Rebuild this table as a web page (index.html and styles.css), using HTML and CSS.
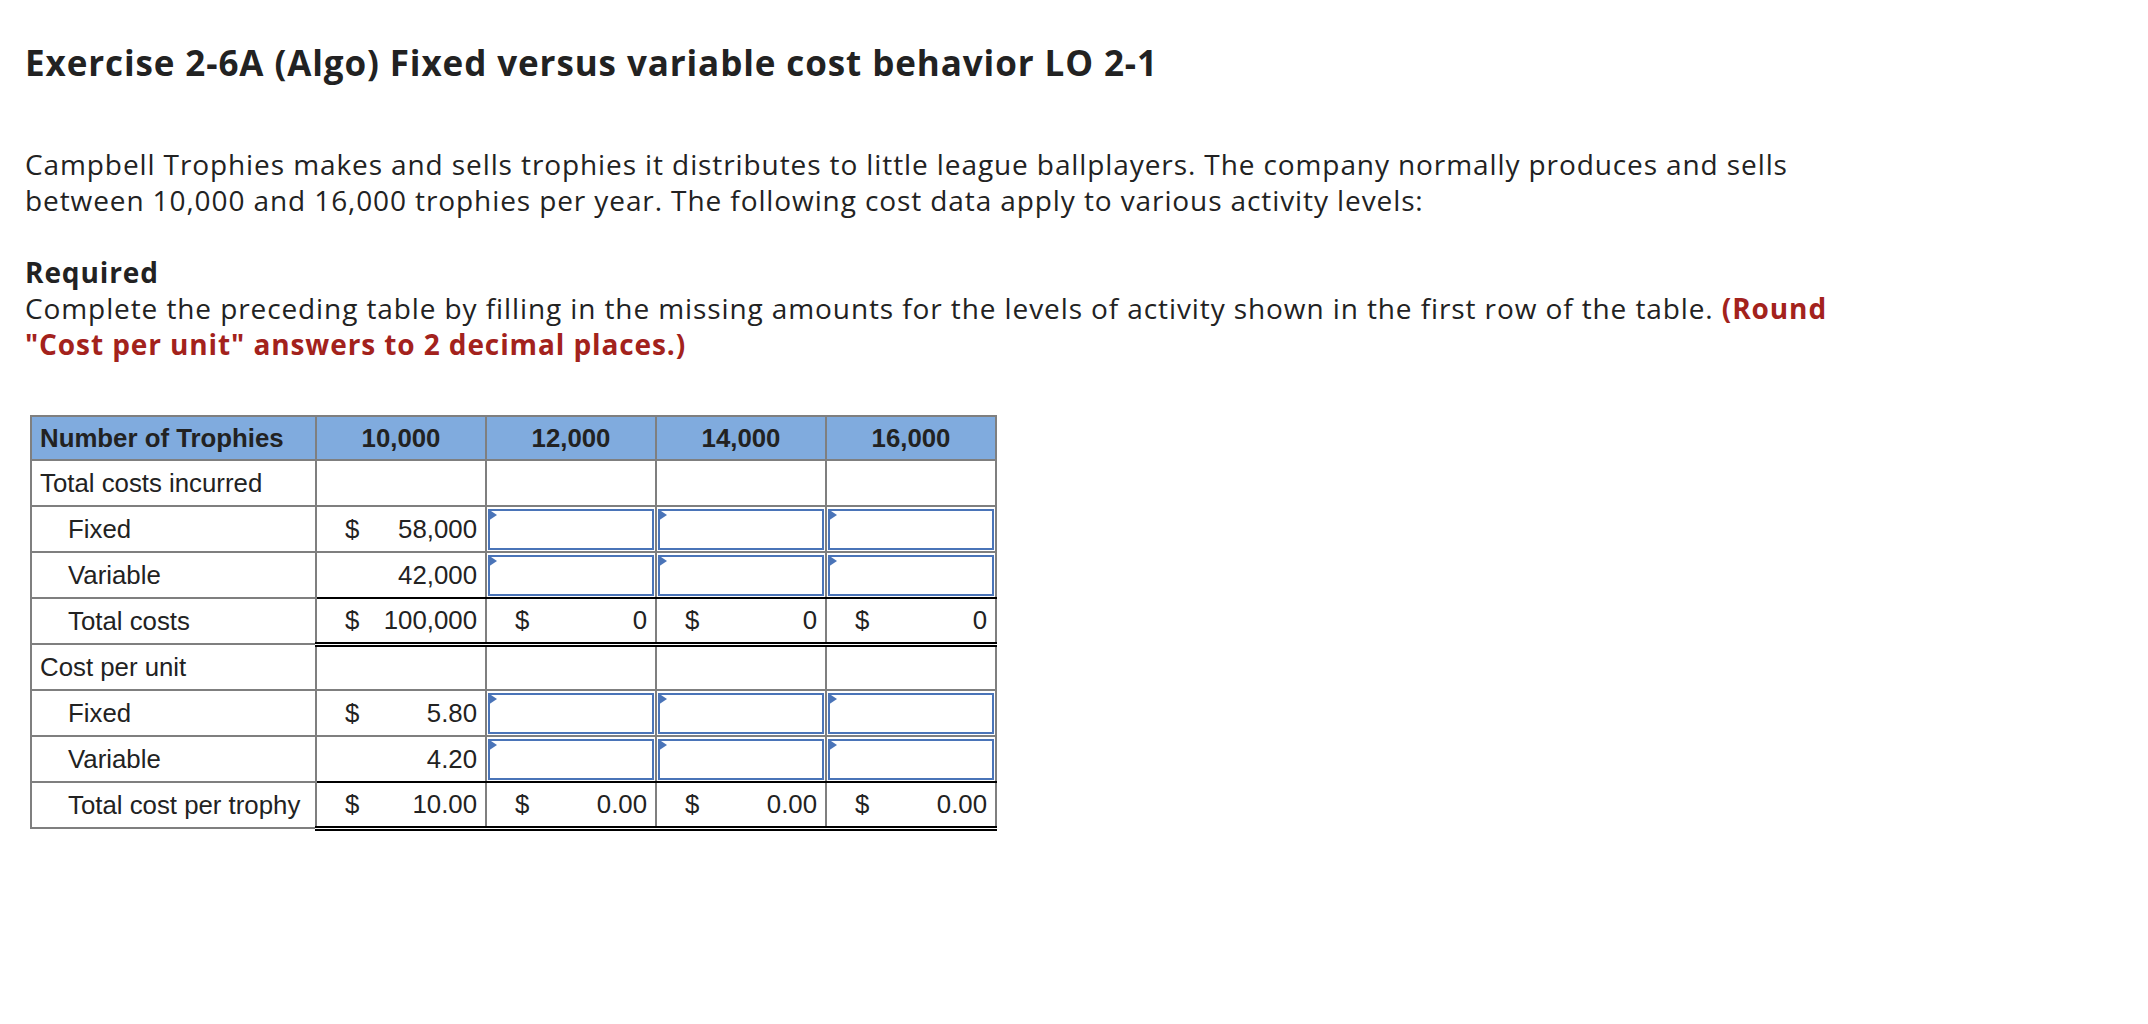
FILE: index.html
```html
<!DOCTYPE html>
<html lang="en">
<head>
<meta charset="utf-8">
<title>Exercise 2-6A (Algo)</title>
<link rel="stylesheet" href="styles.css">
</head>
<body>
<main class="page">
  <h1 class="title">Exercise 2-6A (Algo) Fixed versus variable cost behavior LO 2-1</h1>
  <p class="intro">Campbell Trophies makes and sells trophies it distributes to little league ballplayers. The company normally produces and sells between 10,000 and 16,000 trophies per year. The following cost data apply to various activity levels:</p>
  <div class="req">
    <div class="req-head">Required</div>
    <div>Complete the preceding table by filling in the missing amounts for the levels of activity shown in the first row of the table. <strong class="hint">(Round "Cost per unit" answers to 2 decimal places.)</strong></div>
  </div>

  <table class="sheet">
    <colgroup>
      <col class="c-label"><col class="c-val"><col class="c-val"><col class="c-val"><col class="c-val">
    </colgroup>
    <thead>
      <tr class="head">
        <th class="lbl">Number of Trophies</th>
        <th>10,000</th>
        <th>12,000</th>
        <th>14,000</th>
        <th>16,000</th>
      </tr>
    </thead>
    <tbody>
      <tr>
        <td class="lbl">Total costs incurred</td>
        <td></td><td></td><td></td><td></td>
      </tr>
      <tr>
        <td class="lbl sub">Fixed</td>
        <td><div class="val"><span>$</span><span>58,000</span></div></td>
        <td class="in"><div class="box"></div></td>
        <td class="in"><div class="box"></div></td>
        <td class="in"><div class="box"></div></td>
      </tr>
      <tr class="pre-total">
        <td class="lbl sub">Variable</td>
        <td><div class="val"><span></span><span>42,000</span></div></td>
        <td class="in"><div class="box"></div></td>
        <td class="in"><div class="box"></div></td>
        <td class="in"><div class="box"></div></td>
      </tr>
      <tr class="total">
        <td class="lbl sub">Total costs</td>
        <td><div class="val"><span>$</span><span>100,000</span></div></td>
        <td><div class="val"><span>$</span><span>0</span></div></td>
        <td><div class="val"><span>$</span><span>0</span></div></td>
        <td><div class="val"><span>$</span><span>0</span></div></td>
      </tr>
      <tr>
        <td class="lbl">Cost per unit</td>
        <td></td><td></td><td></td><td></td>
      </tr>
      <tr>
        <td class="lbl sub">Fixed</td>
        <td><div class="val"><span>$</span><span>5.80</span></div></td>
        <td class="in"><div class="box"></div></td>
        <td class="in"><div class="box"></div></td>
        <td class="in"><div class="box"></div></td>
      </tr>
      <tr class="pre-total">
        <td class="lbl sub">Variable</td>
        <td><div class="val"><span></span><span>4.20</span></div></td>
        <td class="in"><div class="box"></div></td>
        <td class="in"><div class="box"></div></td>
        <td class="in"><div class="box"></div></td>
      </tr>
      <tr class="total">
        <td class="lbl sub">Total cost per trophy</td>
        <td><div class="val"><span>$</span><span>10.00</span></div></td>
        <td><div class="val"><span>$</span><span>0.00</span></div></td>
        <td><div class="val"><span>$</span><span>0.00</span></div></td>
        <td><div class="val"><span>$</span><span>0.00</span></div></td>
      </tr>
    </tbody>
  </table>
</main>
</body>
</html>
```

FILE: styles.css
```css
html, body {
  margin: 0;
  padding: 0;
  background: #fff;
}

.page {
  padding: 42px 0 0 25px;
  width: 1830px;
  color: #222;
  font-family: "Open Sans", Lato, sans-serif;
}

.title {
  margin: 0;
  font-size: 35px;
  line-height: 42px;
  font-weight: 700;
  letter-spacing: 0.9px;
  color: #222;
}

.intro {
  margin: 62px 0 0 0;
  font-size: 28px;
  line-height: 36px;
  letter-spacing: 0.9px;
}

.req {
  margin-top: 36px;
  font-size: 28px;
  line-height: 36px;
  letter-spacing: 0.9px;
}

.req-head {
  font-weight: 700;
}

.hint {
  color: #a3221c;
  font-weight: 700;
}

.sheet {
  margin: 53px 0 0 5px;
  border-collapse: collapse;
  table-layout: fixed;
  font-family: "Liberation Sans", Arial, sans-serif;
  font-size: 25.8px;
  color: #222;
}

.c-label { width: 285px; }
.c-val { width: 170px; }

.sheet th,
.sheet td {
  border: 2px solid #7f7f7f;
  padding: 0 8px;
  height: 46px;
  box-sizing: border-box;
}

.head th {
  background: #80abde;
  font-weight: 700;
  text-align: center;
  height: 44px;
}

.head th.lbl {
  text-align: left;
}

.lbl {
  text-align: left;
  white-space: nowrap;
  padding-left: 7px;
}

.sheet td.sub {
  padding-left: 36px;
}

.val {
  display: flex;
  justify-content: space-between;
  padding-left: 20px;
}

.sheet td.in {
  padding: 1px;
}

.box {
  position: relative;
  height: 41px;
  border: 2px solid #4a74b8;
  box-sizing: border-box;
}

.box::before {
  content: "";
  position: absolute;
  left: -2px;
  top: -2px;
  border-left: 9px solid #4a74b8;
  border-top: 6px solid transparent;
  border-bottom: 6px solid transparent;
}

.pre-total td:not(.lbl) {
  border-bottom: 2px solid #000;
}

.total td:not(.lbl) {
  border-bottom: 5px double #000;
}
```
